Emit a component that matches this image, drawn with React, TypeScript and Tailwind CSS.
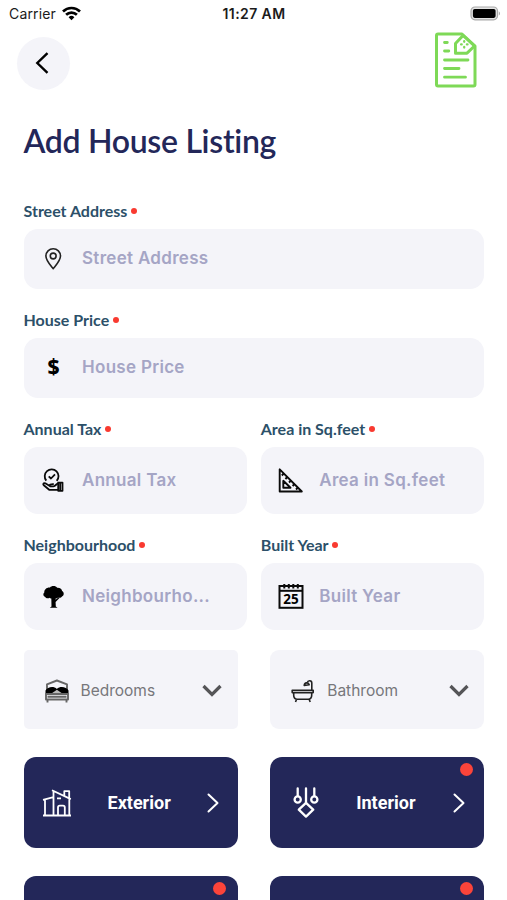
import type { ReactNode } from "react"

function WifiIcon(){
    return(
        <svg className="w-[19px] h-[15px]" viewBox="0 0 19 15" fill="none" stroke="#000" strokeWidth="2.7">
            <path d="M1 5.4a12.3 12.3 0 0 1 17 0" />
            <path d="M4.1 8.7a7.8 7.8 0 0 1 10.8 0" />
            <path d="M9.5 14.2 6.6 11.2a4.2 4.2 0 0 1 5.8 0z" fill="#000" stroke="none" />
        </svg>
    )
}

function BatteryIcon(){
    return(
        <svg className="w-[31px] h-[15px]" viewBox="0 0 31 15">
            <rect x="1" y="1" width="26.5" height="12.8" rx="4" fill="#e4e4e4" stroke="#a9a9a9" strokeWidth="1.2" />
            <rect x="2.9" y="2.9" width="22.7" height="9" rx="1.8" fill="#000" />
            <path d="M28.8 5.2c1.6.7 1.6 3.7 0 4.4z" fill="#a9a9a9" />
        </svg>
    )
}

function DocumentIcon(){
    return(
        <svg className="w-[44px] h-[56px]" viewBox="0 0 44 56" fill="none" stroke="#7ed957" strokeWidth="3" strokeLinejoin="round" strokeLinecap="round">
            <path d="M28 2H4a1.500 1.500 0 0 0-1.500 1.500v49A1.500 1.500 0 0 0 4 54h35.500a1.500 1.500 0 0 0 1.500-1.500V14z" />
            <path d="M21.500 21.200V11.500L29 3.500 40.500 14 33 21.200z" />
            <path d="M10.500 10.500h2.800M10.500 19h4.300M10.500 28h23.500M10.500 36.500h14.500M10.500 45.200h21" strokeWidth="2.800" />
            <path d="M30.200 9.200v.6M30.200 15v.6M27.100 12.400h.6M32.900 12.400h.6" strokeWidth="2.300" />
        </svg>
    )
}

function PinIcon(){
    return(
        <svg className="w-[25px] h-[25px] mb-px" viewBox="0 0 25 25" fill="none" stroke="#222" strokeWidth="1.600" strokeLinejoin="round">
            <path d="M12.200 22.700C9.200 19 4.900 14.500 4.900 10a7.300 7.300 0 0 1 14.600 0c0 4.500-4.300 9-7.300 12.700z" />
            <circle cx="12.200" cy="10" r="2.900" />
        </svg>
    )
}

function DollarIcon(){
    return(
        <span className="w-[25px] mb-[3px] text-center font-['Noto_Sans'] font-extrabold text-[21px] leading-[25px] text-black">$</span>
    )
}

function TaxIcon(){
    return(
        <svg className="w-[25px] h-[25px]" viewBox="0 0 25 25" fill="none" stroke="#0b0b0b" strokeWidth="1.800" strokeLinejoin="round">
            <path d="M5.300 12.600a6.900 6.900 0 1 1 10.400.3" />
            <path d="m7.700 8.300 2.300 2.200 4-4.200" />
            <path d="M17.200 14.600h4.300v8.200h-4.300zM19.200 15v7.500" />
            <path d="M17 15.500c-1.500 0-2.500 2.800-4.500 2.800H9c-1.200-1.500.8-2.400 3.800-2.200M8.800 18 4.300 15.300c-2-.7-2.500 1.200-1.500 2l5.400 4.500H17" />
        </svg>
    )
}

function TriangleIcon(){
    return(
        <svg className="w-[25px] h-[25px]" viewBox="0 0 25 25" fill="none" stroke="#0b0b0b" strokeWidth="1.900" strokeLinejoin="round">
            <path d="M1.700 1.300v22.200h22.100z" />
            <path d="M5.300 12.800v7h7.200z" />
            <path d="M5.800 5.500 3.800 7.500M9.400 9l-2 2M13 12.500l-2 2M16.600 16l-2 2M20 19.500l-2 2" />
        </svg>
    )
}

function TreeIcon(){
    return(
        <svg className="w-[25px] h-[25px] mb-px" viewBox="0 0 25 25" fill="#000">
            <path d="M9 3.600c1.200-2 5.800-2.100 7.200.1 3-.2 4.700 1.400 4.900 3.400 2.300 1.300 2.100 4.700-.1 5.500-.8 1.400-2.800 1.500-3.900.8-1.200 1.400-3.300 1.300-4.300.4-1.200 1.300-3.300.9-3.900-.1-1.600 1-4.100.7-4.700-.8-2.200-.7-2.300-3.400-.9-4.400C3 5.500 6 3.200 9 3.600z" />
            <path d="M10.300 13h4.400l-.1 2.800 3.100-2.600.8.9-3.900 3.900.2 4.400 1.800 1.300H8.800l1.700-1.300z" />
        </svg>
    )
}

function CalendarIcon(){
    return(
        <svg className="w-[26px] h-[26px] -mr-px mb-px" viewBox="0 0 26 26" fill="none" stroke="#0b0b0b" strokeWidth="2">
            <rect x="1.500" y="3" width="23" height="21.800" />
            <path d="M2 7.800h22.500" />
            <path d="M6.300 1v4.500M10.800 1v4.500M15.300 1v4.500M19.800 1v4.500" />
            <text x="13" y="21.300" textAnchor="middle" fill="#000" stroke="none" fontFamily="Noto Sans" fontWeight="700" fontSize="13.500">25</text>
        </svg>
    )
}

function BedIcon(){
    return(
        <svg className="w-[26px] h-[24px]" viewBox="0 0 26 24" fill="none" stroke="#666" strokeWidth="1.900" strokeLinejoin="round">
            <path d="M3 11V5.300L12.900 1.500 23 5.300V11" />
            <path d="M1.500 15v-3.500C3.500 8 9.500 6.500 12.900 10 16.300 6.500 22.500 8 24.500 11.500V15z" fill="#000" stroke="none" />
            <path d="m7.500 14.500 5.400-3.700 5.400 3.700z" fill="#bbb" stroke="none" />
            <path d="M2 20.500V15h22v5.500zM3.500 17.700h19M3.500 21v2.500M22.500 21v2.500" />
        </svg>
    )
}

function BathIcon(){
    return(
        <svg className="w-[24px] h-[24px]" viewBox="0 0 24 24" fill="none" stroke="#222" strokeWidth="1.600" strokeLinejoin="round">
            <path d="M1.200 11.300h21v2.300h-21zM2.700 14v2.300c0 2.500 1.500 3.900 3.500 3.900h11c2 0 3.500-1.400 3.500-3.900V14M5.500 20.500l-1 2.500M18.200 20.500l1 2.500" />
            <path d="M20.800 11V4c0-3-4-3-4.500-.3" />
            <path d="M13.200 6.500c.3-3.300 4.300-3.500 5-.7z" />
        </svg>
    )
}

function HouseIcon(){
    return(
        <svg className="w-[30px] h-[28px]" viewBox="0 0 30 28" fill="none" stroke="#fff" strokeWidth="1.800" strokeLinejoin="round">
            <path d="M1 26.500h28M1 10.800l10.500-2.700M3 10.500v15.700M11.500 2v24M10 1.300l18.800 8.800M27.300 9.800v16.500M22.300 6.700V2.200h4.900v7" />
            <path d="M16 26v-7.500a1.800 1.800 0 0 1 1.800-1.800h3.200a1.800 1.800 0 0 1 1.800 1.800V26M15 9.300h4" />
        </svg>
    )
}

function LampIcon(){
    return(
        <svg className="w-[26px] h-[31px]" viewBox="0 0 26 31" fill="none" stroke="#fff" strokeWidth="2.300" strokeLinecap="round">
            <path d="M4.700 1.500v7.300M13 1.500v14M21.300 1.500v7.300" />
            <circle cx="4.700" cy="12.500" r="3.100" />
            <circle cx="21.300" cy="12.500" r="3.100" />
            <path d="m13 15.800 7.200 6.900-7.200 6.900-7.200-6.900z" strokeLinejoin="round" />
        </svg>
    )
}

type FieldProps = {
    label: string
    placeholder?: string
    icon: ReactNode
    tall?: boolean
}

function Field({ label, placeholder = label, icon, tall }: FieldProps){
    return(
        <label className="flex flex-col gap-2 flex-1 min-w-0">
            <span className="flex items-center gap-[3.5px] h-5 font-['Lato'] font-bold text-[16px] text-[#2c5069]">
                {label}
                <i className="size-1.5 rounded-full bg-[#f93a30]" />
            </span>
            <span className={`flex items-center gap-4 pl-[17.5px] rounded-[14px] bg-[#f4f4f9] ${tall ? "h-[67px]" : "h-[60px]"}`}>
                {icon}
                <span className="font-semibold text-[17px] tracking-[0.3px] text-[#a5a5c5] whitespace-nowrap">{placeholder}</span>
            </span>
        </label>
    )
}

function Select({ label, icon, className }: { label: string, icon: ReactNode, className: string }){
    return(
        <div className={`flex items-center h-[79px] pt-0.5 pr-[15.5px] bg-[#f4f4f9] ${className}`}>
            {icon}
            <span className="flex-1 pt-px text-[15.5px] text-[#77777b]">{label}</span>
            <svg className="w-5 h-[14px]" viewBox="0 0 20 14" fill="none" stroke="#555558" strokeWidth="3.200">
                <path d="m1.500 2 8.500 8.500L18.500 2" />
            </svg>
        </div>
    )
}

type SectionButtonProps = {
    label?: string
    icon?: ReactNode
    dot?: boolean
    className?: string
}

function SectionButton({ label, icon, dot, className = "" }: SectionButtonProps){
    return(
        <button className={`relative flex items-center h-[91px] pr-[19px] rounded-xl bg-[#232759] ${className}`}>
            {icon}
            {label && (
                <>
                    <strong className="flex-1 text-center font-['Roboto'] font-bold text-[18px] text-white">{label}</strong>
                    <svg className="w-[12px] h-[20px]" viewBox="0 0 12 20" fill="none" stroke="#fff" strokeWidth="2" strokeLinecap="round" strokeLinejoin="round">
                        <path d="m1.500 1.500 9 8.500-9 8.500" />
                    </svg>
                </>
            )}
            {dot && <i className="absolute top-[6px] right-[11.5px] size-[13px] rounded-full bg-[#fb443a]" />}
        </button>
    )
}

export default function App(){
    return(
        <main className="w-[507px] h-[900px] overflow-hidden bg-white font-['Inter',sans-serif]">
            <div className="grid grid-cols-3 items-center h-[27px] pl-[9px] pr-[6px] text-[14px] text-[#1b1b1b]">
                <span className="flex items-center gap-1.5 tracking-[0.15px]">
                    Carrier
                    <WifiIcon />
                </span>
                <span className="text-center font-semibold tracking-[0.4px] -ml-[2px]">11:27 AM</span>
                <span className="flex justify-end"><BatteryIcon /></span>
            </div>
            <header className="flex justify-between items-start h-[94px] pl-[17px] pr-[29px] pt-[5px]">
                <button className="mt-[5px] size-[53px] rounded-full bg-[#f4f4f9] flex items-center justify-center">
                    <svg className="w-[14px] h-[22px] mr-[3px] mb-px" viewBox="0 0 14 22" fill="none" stroke="#000" strokeWidth="2.400">
                        <path d="M12.500 1.200 2.300 11l10.200 9.800" />
                    </svg>
                </button>
                <DocumentIcon />
            </header>
            <div className="pl-[23.5px] pr-[23px]">
                <h1 className="h-10 leading-10 mb-10 font-['Lato'] font-semibold text-[32px] tracking-[-0.3px] text-[#232759] whitespace-nowrap">Add House Listing</h1>
                <div className="flex flex-col gap-[21px]">
                    <Field label="Street Address" icon={<PinIcon />} />
                    <Field label="House Price" icon={<DollarIcon />} />
                    <div className="flex gap-[14px]">
                        <Field label="Annual Tax" icon={<TaxIcon />} tall />
                        <Field label="Area in Sq.feet" icon={<TriangleIcon />} tall />
                    </div>
                    <div className="flex gap-[14px]">
                        <Field label="Neighbourhood" placeholder="Neighbourho..." icon={<TreeIcon />} tall />
                        <Field label="Built Year" icon={<CalendarIcon />} tall />
                    </div>
                </div>
                <div className="grid grid-cols-2 gap-x-8 gap-y-[28px] mt-5">
                    <Select label="Bedrooms" icon={<BedIcon />} className="gap-[11px] pl-5 rounded-[5px]" />
                    <Select label="Bathroom" icon={<BathIcon />} className="gap-3 pl-[21.5px] rounded-[9px]" />
                    <SectionButton label="Exterior" icon={<HouseIcon />} className="pl-[18px]" />
                    <SectionButton label="Interior" icon={<LampIcon />} className="gap-1 pl-[23px]" dot />
                    <SectionButton dot />
                    <SectionButton dot />
                </div>
            </div>
        </main>
    )
}
